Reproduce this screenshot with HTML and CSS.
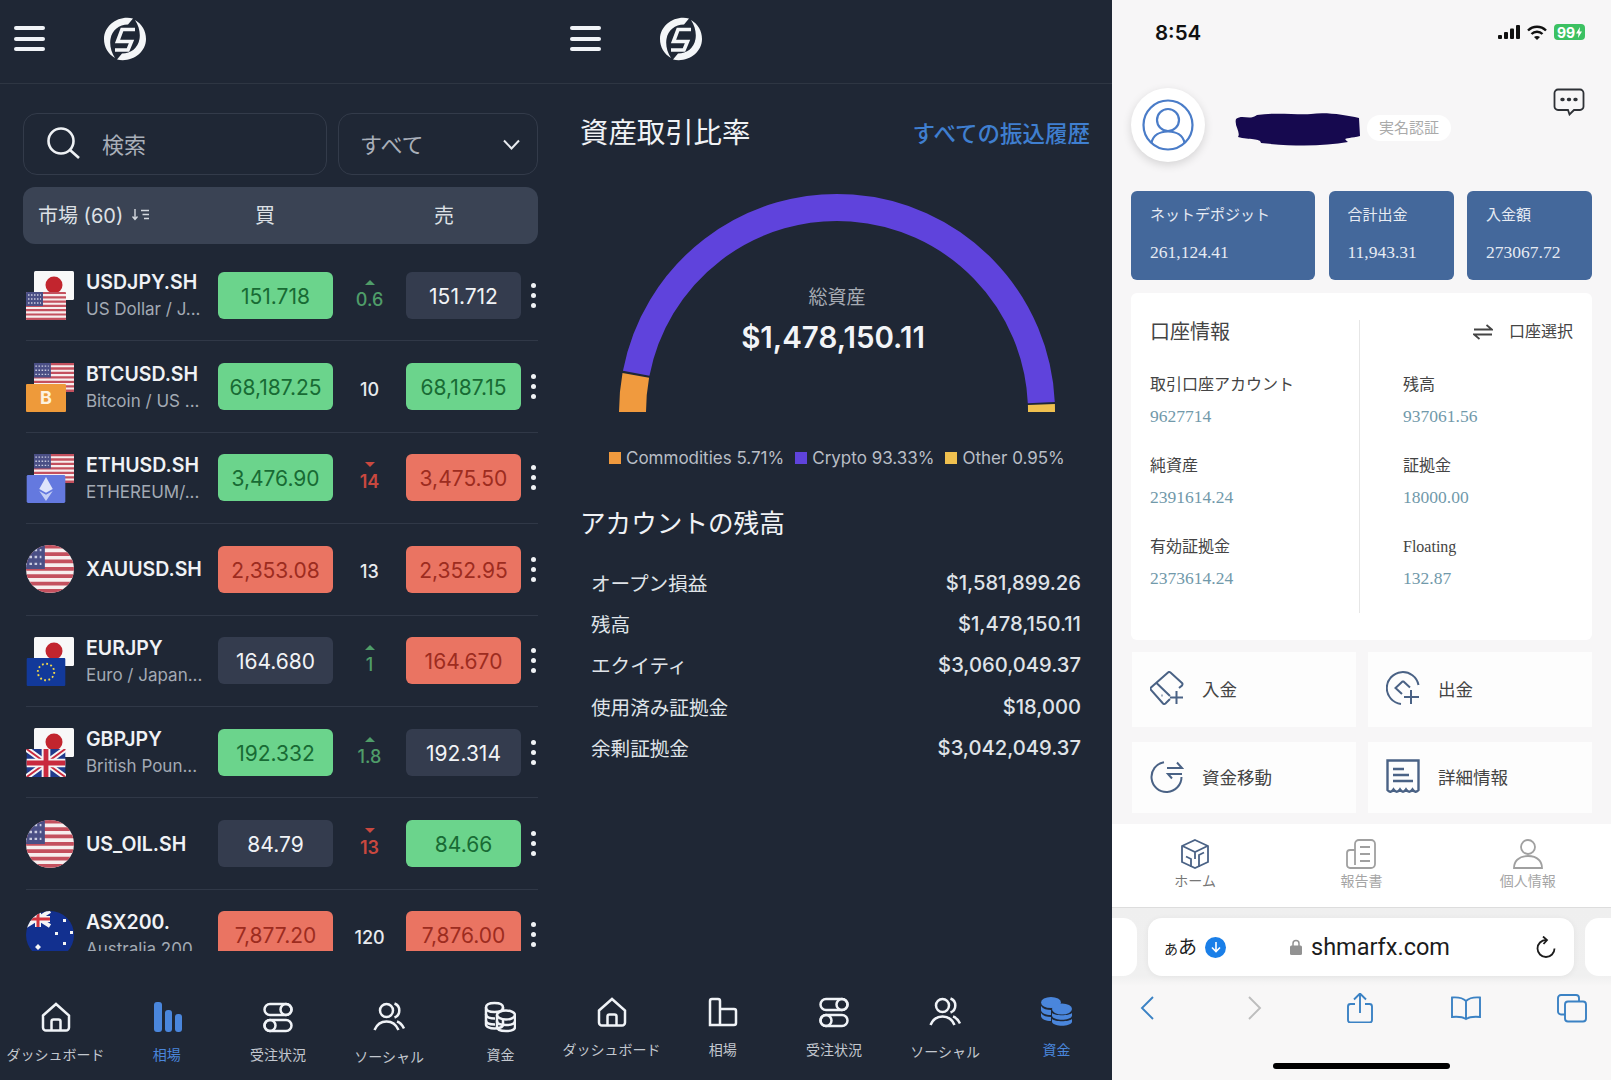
FILE: index.html
```html
<!DOCTYPE html>
<html lang="ja">
	<head>
		<meta charset="UTF-8">
		<meta name="viewport" content="width=device-width, initial-scale=1.0">
		<title>SHMAR FX</title>
		<link rel="stylesheet" href="styles.css">
	</head>
	<body>

		<svg class="sprites" width="0" height="0">
			<symbol id="flag-us" viewBox="0 0 40 28" preserveAspectRatio="xMidYMid slice">
				<rect width="40" height="28" fill="#f7eeee"/>
				<path d="M0 1h40M0 5.300h40M0 9.600h40M0 13.900h40M0 18.200h40M0 22.500h40M0 26.800h40" stroke="#c4505e" stroke-width="2.200"/>
				<rect width="17" height="14" fill="#4a4f85"/>
				<path d="M2 3h13M2 7h13M2 11h13" stroke="#c9cbe0" stroke-width="1.400" stroke-dasharray="1.500 1.500"/>
			</symbol>
			<symbol id="flag-jp" viewBox="0 0 40 29">
				<rect width="40" height="29" rx="1.500" fill="#f8f8f8"/>
				<circle cx="20" cy="14" r="8.500" fill="#c2252e"/>
			</symbol>
			<symbol id="flag-eu" viewBox="0 0 40 29">
				<rect width="40" height="29" rx="1" fill="#12399a"/>
				<circle cx="20" cy="14.500" r="8.500" fill="none" stroke="#f0d64a" stroke-width="2" stroke-dasharray="1.800 2.650"/>
			</symbol>
			<symbol id="flag-uk" viewBox="0 0 40 29">
				<rect width="40" height="29" fill="#1f3a8c"/>
				<path d="M0 0L40 29M40 0L0 29" stroke="#f5f5f5" stroke-width="6"/>
				<path d="M0 0L40 29M40 0L0 29" stroke="#c92a3e" stroke-width="2"/>
				<path d="M20 0V29M0 14.500H40" stroke="#f5f5f5" stroke-width="9"/>
				<path d="M20 0V29M0 14.500H40" stroke="#c92a3e" stroke-width="5"/>
			</symbol>
			<symbol id="flag-eth" viewBox="0 0 40 29">
				<rect width="40" height="29" rx="1.500" fill="#6479df"/>
				<path d="M20 2L27 14.500L20 18.500L13 14.500Z" fill="#dfe5fb"/>
				<path d="M20 20.500L27 16.500L20 27L13 16.500Z" fill="#c5cff5"/>
			</symbol>
			<symbol id="flag-au" viewBox="0 0 48 48">
				<rect width="48" height="48" fill="#12308f"/>
				<path d="M0 0L24 15M24 0L0 15" stroke="#f5f5f5" stroke-width="4"/>
				<path d="M12 0V16M0 8H24" stroke="#f5f5f5" stroke-width="6"/>
				<path d="M12 0V16M0 8H24" stroke="#d2343f" stroke-width="3"/>
				<path d="M37 8h3v3h-3zM29 21h3v3h-3zM44 20h3v3h-3zM37 31h3v3h-3zM12 33l3 3-3 3-3-3z" fill="#f5f5f5"/>
			</symbol>
			<symbol id="logo" viewBox="0 0 44 44">
				<path d="M30 1.500C16 -2 1 8 1 22C1 30 5 37 12 41C8 35 6.500 28 7.500 22C9 13 16 7.500 25 7.500Z" fill="#f4f6f8"/>
				<path d="M14 42.500C28 46 43 36 43 22C43 14 39 7 32 3C36 9 37.500 16 36.500 22C35 31 28 36.500 19 36.500Z" fill="#f4f6f8"/>
				<path d="M32 12.500H19L14.500 24.500H28.500L25 33H12" fill="none" stroke="#f4f6f8" stroke-width="3.600" stroke-linejoin="miter"/>
			</symbol>
			<symbol id="nav-home" viewBox="0 0 32 32">
				<path d="M3 14.500L16 3L29 14.500V26.500A3 3 0 0 1 26 29.500H6A3 3 0 0 1 3 26.500Z"/>
				<path d="M11.500 29.500V20.500A2 2 0 0 1 13.500 18.500H18.500A2 2 0 0 1 20.500 20.500V29.500"/>
			</symbol>
			<symbol id="nav-orders" viewBox="0 0 32 32">
				<rect x="2.500" y="3" width="27" height="11" rx="5.500"/>
				<circle cx="24" cy="8.500" r="5.500"/>
				<rect x="2.500" y="19" width="27" height="11" rx="5.500"/>
				<circle cx="8" cy="24.500" r="5.500"/>
			</symbol>
			<symbol id="nav-social" viewBox="0 0 32 32">
				<circle cx="13.500" cy="9.500" r="6.500"/>
				<path d="M21.500 2.500A7.500 7.500 0 0 1 21.500 16.500"/>
				<path d="M1.500 29C4 23 9 20.500 13.500 20.500S23 23 25.500 29"/>
				<path d="M24 20.500C27 21.500 29.500 24.500 31 27.500"/>
			</symbol>
			<symbol id="nav-coins" viewBox="0 0 32 32">
				<path d="M2 6.500C2 3.500 6 2 10.500 2S19 3.500 19 6.500V24C19 26 15 27.500 10.500 27.500S2 26 2 23.500Z"/>
				<path d="M2 6.500C2 9.500 6 11 10.500 11S19 9.500 19 6.500M2 13C2 16 6 17.500 11 17.500M2 19.500C2 22 6 23.500 11 23.500"/>
				<ellipse cx="22" cy="14" rx="9" ry="4.500" fill="#1f2735"/>
				<path d="M13 14V26C13 28.500 17 30 22 30S31 28.500 31 26V14"/>
				<path d="M13 20C13 22.500 17 24 22 24S31 22.500 31 20"/>
			</symbol>
		</svg>

		<div class="screens">

			<section class="panel">
				<header class="app-head">
					<div class="burger"><span></span><span></span><span></span></div>
					<svg class="logo"><use href="#logo"/></svg>
				</header>

				<div class="filters">
					<div class="search">
						<svg class="search-icon" viewBox="0 0 33 32"><circle cx="14" cy="14" r="12.500"/><path d="M23 23L32 31"/></svg>
						<span>検索</span>
					</div>
					<div class="select">
						<span>すべて</span>
						<svg class="chevron" viewBox="0 0 17 11"><path d="M1 1.500L8.500 9.500L16 1.500"/></svg>
					</div>
				</div>

				<div class="market-head">
					<div class="market-title">
						<span>市場 (60)</span>
						<svg class="sort-icon" viewBox="0 0 18 12"><path d="M3 0V10M0.500 7.500L3 10.500L5.500 7.500M9 1.500H17M10.500 5.500H17M12 9.500H17"/></svg>
					</div>
					<span class="col-buy">買</span>
					<span class="col-sell">売</span>
				</div>

				<div class="quotes">
					<div class="quote">
						<div class="pair"><svg class="flag-back"><use href="#flag-jp"/></svg><svg class="flag-front"><use href="#flag-us"/></svg></div>
						<div class="names"><strong>USDJPY.SH</strong><small>US Dollar / J...</small></div>
						<div class="price up">151.718</div>
						<div class="change pos"><i class="arrow-up"></i>0.6</div>
						<div class="price flat">151.712</div>
						<div class="more"><span></span><span></span><span></span></div>
					</div>
					<div class="quote">
						<div class="pair"><svg class="flag-back"><use href="#flag-us"/></svg><div class="flag-front coin-btc">B</div></div>
						<div class="names"><strong>BTCUSD.SH</strong><small>Bitcoin / US ...</small></div>
						<div class="price up">68,187.25</div>
						<div class="change still">10</div>
						<div class="price up">68,187.15</div>
						<div class="more"><span></span><span></span><span></span></div>
					</div>
					<div class="quote">
						<div class="pair"><svg class="flag-back"><use href="#flag-us"/></svg><svg class="flag-front"><use href="#flag-eth"/></svg></div>
						<div class="names"><strong>ETHUSD.SH</strong><small>ETHEREUM/...</small></div>
						<div class="price up">3,476.90</div>
						<div class="change neg"><i class="arrow-down"></i>14</div>
						<div class="price down">3,475.50</div>
						<div class="more"><span></span><span></span><span></span></div>
					</div>
					<div class="quote">
						<div class="pair"><svg class="flag-round"><use href="#flag-us"/></svg></div>
						<div class="names"><strong>XAUUSD.SH</strong></div>
						<div class="price down">2,353.08</div>
						<div class="change still">13</div>
						<div class="price down">2,352.95</div>
						<div class="more"><span></span><span></span><span></span></div>
					</div>
					<div class="quote">
						<div class="pair"><svg class="flag-back"><use href="#flag-jp"/></svg><svg class="flag-front"><use href="#flag-eu"/></svg></div>
						<div class="names"><strong>EURJPY</strong><small>Euro / Japan...</small></div>
						<div class="price flat">164.680</div>
						<div class="change pos"><i class="arrow-up"></i>1</div>
						<div class="price down">164.670</div>
						<div class="more"><span></span><span></span><span></span></div>
					</div>
					<div class="quote">
						<div class="pair"><svg class="flag-back"><use href="#flag-jp"/></svg><svg class="flag-front"><use href="#flag-uk"/></svg></div>
						<div class="names"><strong>GBPJPY</strong><small>British Poun...</small></div>
						<div class="price up">192.332</div>
						<div class="change pos"><i class="arrow-up"></i>1.8</div>
						<div class="price flat">192.314</div>
						<div class="more"><span></span><span></span><span></span></div>
					</div>
					<div class="quote">
						<div class="pair"><svg class="flag-round"><use href="#flag-us"/></svg></div>
						<div class="names"><strong>US_OIL.SH</strong></div>
						<div class="price flat">84.79</div>
						<div class="change neg"><i class="arrow-down"></i>13</div>
						<div class="price up">84.66</div>
						<div class="more"><span></span><span></span><span></span></div>
					</div>
					<div class="quote">
						<div class="pair"><svg class="flag-round"><use href="#flag-au"/></svg></div>
						<div class="names"><strong>ASX200.</strong><small>Australia 200</small></div>
						<div class="price down">7,877.20</div>
						<div class="change still">120</div>
						<div class="price down">7,876.00</div>
						<div class="more"><span></span><span></span><span></span></div>
					</div>
				</div>

				<nav class="app-nav nav-low">
					<div class="nav-item">
						<svg class="nav-icon"><use href="#nav-home"/></svg>
						<span>ダッシュボード</span>
					</div>
					<div class="nav-item active">
						<svg class="nav-icon" viewBox="0 0 32 32"><rect x="3" y="1" width="8" height="30" rx="3" fill="#4a86dc" stroke="none"/><rect x="14" y="9" width="7" height="22" rx="3" fill="#4a86dc" stroke="none"/><rect x="24" y="13" width="7" height="18" rx="3" fill="#4a86dc" stroke="none"/></svg>
						<span>相場</span>
					</div>
					<div class="nav-item">
						<svg class="nav-icon"><use href="#nav-orders"/></svg>
						<span>受注状況</span>
					</div>
					<div class="nav-item social">
						<svg class="nav-icon"><use href="#nav-social"/></svg>
						<span>ソーシャル</span>
					</div>
					<div class="nav-item">
						<svg class="nav-icon"><use href="#nav-coins"/></svg>
						<span>資金</span>
					</div>
				</nav>
			</section>

			<section class="panel">
				<header class="app-head">
					<div class="burger"><span></span><span></span><span></span></div>
					<svg class="logo"><use href="#logo"/></svg>
				</header>

				<div class="assets-head">
					<h2>資産取引比率</h2>
					<a class="all-link">すべての振込履歴</a>
				</div>

				<div class="gauge">
					<svg class="gauge-chart" viewBox="0 0 440 220">
						<path d="M15.500 220A204.500 204.500 0 0 1 18.800 183.400" stroke="#f09a3e"/>
						<path d="M19.200 181.300A204.500 204.500 0 0 1 424.300 210.700" stroke="#5f43dc"/>
						<path d="M424.400 212.500A204.500 204.500 0 0 1 424.500 220" stroke="#efc04f"/>
					</svg>
					<div class="gauge-text">
						<span>総資産</span>
						<strong>$1,478,150.11</strong>
					</div>
				</div>

				<div class="legend">
					<span class="legend-item"><i class="dot-orange"></i>Commodities 5.71%</span>
					<span class="legend-item"><i class="dot-purple"></i>Crypto 93.33%</span>
					<span class="legend-item"><i class="dot-yellow"></i>Other 0.95%</span>
				</div>

				<h3 class="balance-title">アカウントの残高</h3>
				<div class="balance">
					<div class="balance-row"><span>オープン損益</span><span>$1,581,899.26</span></div>
					<div class="balance-row"><span>残高</span><span>$1,478,150.11</span></div>
					<div class="balance-row"><span>エクイティ</span><span>$3,060,049.37</span></div>
					<div class="balance-row"><span>使用済み証拠金</span><span>$18,000</span></div>
					<div class="balance-row"><span>余剰証拠金</span><span>$3,042,049.37</span></div>
				</div>

				<nav class="app-nav nav-high">
					<div class="nav-item">
						<svg class="nav-icon"><use href="#nav-home"/></svg>
						<span>ダッシュボード</span>
					</div>
					<div class="nav-item">
						<svg class="nav-icon" viewBox="0 0 32 32"><path d="M3 29V5A2 2 0 0 1 5 3H11A2 2 0 0 1 13 5V29ZM13 13H27A2 2 0 0 1 29 15V27A2 2 0 0 1 27 29H3"/><path d="M20 13V29" stroke-width="0"/></svg>
						<span>相場</span>
					</div>
					<div class="nav-item">
						<svg class="nav-icon"><use href="#nav-orders"/></svg>
						<span>受注状況</span>
					</div>
					<div class="nav-item social">
						<svg class="nav-icon"><use href="#nav-social"/></svg>
						<span>ソーシャル</span>
					</div>
					<div class="nav-item active">
						<svg class="nav-icon" viewBox="0 0 32 32">
							<ellipse cx="11" cy="6.500" rx="10" ry="5.500" fill="#4a86dc" stroke="none"/>
							<path d="M1 10C3 13 7 14 11 14V19C6 19 1 17 1 14ZM1 17C3 20 7 21 11 21V25C6 25 1 23 1 20Z" fill="#4a86dc" stroke="none"/>
							<ellipse cx="22" cy="13" rx="10" ry="5.500" fill="#4a86dc" stroke="none"/>
							<path d="M12 17C15 20 29 20 32 17V20C30 25 14 25 12 20ZM12 23C15 26 29 26 32 23V26C30 31 14 31 12 26Z" fill="#4a86dc" stroke="none"/>
						</svg>
						<span>資金</span>
					</div>
				</nav>
			</section>

			<section class="account">
				<div class="status-bar">
					<span class="clock">8:54</span>
					<div class="status-icons">
						<svg class="signal" viewBox="0 0 22 14"><rect x="0" y="10" width="4" height="4" rx="1"/><rect x="6" y="7" width="4" height="7" rx="1"/><rect x="12" y="3.500" width="4" height="10.500" rx="1"/><rect x="18" y="0" width="4" height="14" rx="1"/></svg>
						<svg class="wifi" viewBox="0 0 20 15"><path d="M1 5.500C6 0.500 14 0.500 19 5.500" fill="none" stroke="#111" stroke-width="2.400"/><path d="M4.500 9C7.500 6 12.500 6 15.500 9" fill="none" stroke="#111" stroke-width="2.400"/><path d="M7 12C8.500 10.500 11.500 10.500 13 12L10 15Z" fill="#111"/></svg>
						<div class="battery">99<svg class="bolt" viewBox="0 0 6 11"><path d="M4 0L0 6.500H2.500L2 11L6 4.500H3.500Z"/></svg></div>
					</div>
				</div>

				<div class="profile">
					<div class="avatar">
						<svg class="avatar-icon" viewBox="0 0 52 52"><circle cx="26" cy="26" r="24.500"/><circle cx="26" cy="21" r="11"/><path d="M9.500 44C11 36 18 32.500 26 32.500S41 36 42.500 44"/></svg>
					</div>
					<svg class="redaction" viewBox="0 0 125 34"><path d="M1 7C8 2 14 9 22 3C40 0 62 3 76 2C92 0 110 3 124 6L125 24C114 27 106 25 113 30C90 34 62 35 26 31C26 26 14 28 3 25C6 20 -1 14 1 7Z"/></svg>
					<span class="verify">実名認証</span>
					<svg class="chat" viewBox="0 0 32 28"><path d="M5 1.500H27A3.500 3.500 0 0 1 30.500 5V18.500A3.500 3.500 0 0 1 27 22H21L16.500 26.500L15 22H5A3.500 3.500 0 0 1 1.500 18.500V5A3.500 3.500 0 0 1 5 1.500Z"/><path d="M9 11.500H10M15.500 11.500H16.500M22 11.500H23" stroke-width="3.400" stroke-linecap="round"/></svg>
				</div>

				<div class="stats">
					<div class="stat"><span>ネットデポジット</span><strong>261,124.41</strong></div>
					<div class="stat"><span>合計出金</span><strong>11,943.31</strong></div>
					<div class="stat"><span>入金額</span><strong>273067.72</strong></div>
				</div>

				<div class="info">
					<div class="info-col info-left">
						<div class="info-head"><h4>口座情報</h4></div>
						<div class="field"><span>取引口座アカウント</span><b>9627714</b></div>
						<div class="field"><span>純資産</span><b>2391614.24</b></div>
						<div class="field"><span>有効証拠金</span><b>2373614.24</b></div>
					</div>
					<div class="info-col info-right">
						<div class="info-head pick">
							<svg class="swap" viewBox="0 0 20 16"><path d="M1 5.500H19L13.500 1M19 10.500H1L6.500 15"/></svg>
							<span>口座選択</span>
						</div>
						<div class="field"><span>残高</span><b>937061.56</b></div>
						<div class="field"><span>証拠金</span><b>18000.00</b></div>
						<div class="field"><span>Floating</span><b>132.87</b></div>
					</div>
				</div>

				<div class="tiles">
					<div class="tile">
						<svg class="tile-icon" viewBox="0 0 34 34"><path d="M20 28L15.500 32.500Q14 33.500 13 32.500L1 19Q0 17.500 1 16.500L18 1.500Q19 0.500 20.500 1.500L32 12Q33 13 32 14.500L29 17"/><path d="M6.500 12L20 25M11.500 24.500H12.500"/><path d="M26.500 20V33M20 26.500H33"/></svg>
						<span>入金</span>
					</div>
					<div class="tile">
						<svg class="tile-icon" viewBox="0 0 34 34"><path d="M32.500 14A16 16 0 1 0 15 33"/><path d="M17 10L9.500 17L16 23M17 10L24 16.500"/><path d="M25 19V33M18 26H33"/></svg>
						<span>出金</span>
					</div>
					<div class="tile">
						<svg class="tile-icon" viewBox="0 0 34 34"><path d="M14 3.200A15 15 0 1 0 31.500 18"/><path d="M17 9H32L27 3.500"/><path d="M32 15H18L22 19.500"/></svg>
						<span>資金移動</span>
					</div>
					<div class="tile">
						<svg class="tile-icon heavy" viewBox="0 0 34 34"><path d="M1.500 1.500H32.500V31C30.500 33.500 28.500 33.500 26.500 30.500C24.500 33.500 22 33.500 20 30.500C18 33.500 16 33.500 14 30.500C12 33.500 9.500 33.500 7.500 30.500C5.500 33.500 3.500 33.500 1.500 31Z"/><path d="M7 10H18M7 16H23M7 22H27"/></svg>
						<span>詳細情報</span>
					</div>
				</div>

				<div class="tabs">
					<div class="tab current">
						<svg class="tab-icon" viewBox="0 0 30 30"><path d="M15 1L28 7V23L15 29L2 23V7Z"/><path d="M2.500 7L15 13L27.500 7M15 13V20M19 28V16L24 13.500M11 28V20L6 17.500"/></svg>
						<span>ホーム</span>
					</div>
					<div class="tab">
						<svg class="tab-icon" viewBox="0 0 30 30"><path d="M9 26V5A4 4 0 0 1 13 1H25A4 4 0 0 1 29 5V25A4 4 0 0 1 25 29H4A3 3 0 0 1 1 26V14A3 3 0 0 1 4 11H9"/><path d="M14 8H24M14 15H24M14 22H24"/></svg>
						<span>報告書</span>
					</div>
					<div class="tab">
						<svg class="tab-icon" viewBox="0 0 30 30"><circle cx="15" cy="8" r="7"/><path d="M1 29C1 23 5 17 15 17S29 23 29 29Z"/></svg>
						<span>個人情報</span>
					</div>
				</div>

				<div class="browser">
					<div class="address-row">
						<div class="side-pill left-pill"></div>
						<div class="address">
							<span class="aa"><small>あ</small>あ</span>
							<span class="download"><svg viewBox="0 0 12 12"><path d="M6 1V10M2 6.500L6 10.500L10 6.500"/></svg></span>
							<div class="url">
								<svg class="lock" viewBox="0 0 12 16"><path d="M3 7V4.500A3 3 0 0 1 9 4.500V7" fill="none" stroke="#929292" stroke-width="1.500"/><rect y="6.500" width="12" height="9.500" rx="1.500" fill="#929292"/></svg>
								<span>shmarfx.com</span>
							</div>
							<svg class="reload" viewBox="0 0 20 22"><path d="M10 4A8.500 8.500 0 1 0 18.500 12.500"/><path d="M7 0.500L11 4L7.500 8"/></svg>
						</div>
						<div class="side-pill right-pill"></div>
					</div>
					<div class="toolbar">
						<svg class="tool" viewBox="0 0 30 24"><path d="M20 1L9 12L20 23"/></svg>
						<svg class="tool off" viewBox="0 0 30 24"><path d="M10 1L21 12L10 23"/></svg>
						<svg class="tool" viewBox="0 0 30 30"><path d="M10 11H5.500A2.500 2.500 0 0 0 3 13.500V27A2.500 2.500 0 0 0 5.500 29.500H24.500A2.500 2.500 0 0 0 27 27V13.500A2.500 2.500 0 0 0 24.500 11H20"/><path d="M15 20V1M9 6.500L15 0.500L21 6.500"/></svg>
						<svg class="tool" viewBox="0 0 30 24"><path d="M15 5C12 2 7 1 1 1.500V21C7 20.500 12 21 15 23C18 21 23 20.500 29 21V1.500C23 1 18 2 15 5ZM15 5V23"/></svg>
						<svg class="tool" viewBox="0 0 30 28"><rect x="8" y="7.500" width="21" height="20" rx="3"/><path d="M8 20.500H4A3 3 0 0 1 1 17.500V4A3 3 0 0 1 4 1H19A3 3 0 0 1 22 4V7.500"/></svg>
					</div>
					<div class="home-bar"></div>
				</div>
			</section>

		</div>

	</body>
</html>
```

FILE: styles.css
```css
* {
	box-sizing: border-box;
	margin: 0;
	padding: 0;
}
body {
	width: 1611px;
	height: 1080px;
	overflow: hidden;
	background-color: #1f2735;
	font-family: Inter, 'Noto Sans CJK JP', sans-serif;
}
.sprites {
	position: absolute;
}
.screens {
	display: flex;
	height: 1080px;
}

/* dark app panels */
.panel {
	display: flex;
	flex-direction: column;
	flex: none;
	width: 556px;
	height: 1080px;
	background-color: #1f2735;
	color: #f0f2f5;
}
.app-head {
	display: flex;
	align-items: center;
	flex: none;
	height: 84px;
	padding: 0 0 6px 14px;
	border-bottom: 1px solid #2e3643;
}
.burger {
	display: flex;
	flex-direction: column;
	justify-content: space-between;
	width: 31px;
	height: 25px;
}
.burger span {
	height: 4px;
	border-radius: 2px;
	background-color: #f0f3f7;
}
.logo {
	width: 44px;
	height: 44px;
	margin-left: 58px;
}

.filters {
	display: flex;
	gap: 11px;
	flex: none;
	margin: 29px 18px 0 23px;
}
.search,
.select {
	display: flex;
	align-items: center;
	height: 62px;
	border: 1px solid #333b4a;
	border-radius: 14px;
	color: #a9afb9;
	font-size: 22px;
}
.search {
	gap: 22px;
	width: 304px;
	padding: 0 0 3px 23px;
}
.search-icon {
	width: 33px;
	height: 32px;
	fill: none;
	stroke: #eef1f4;
	stroke-width: 2.6;
}
.select {
	justify-content: space-between;
	width: 200px;
	padding: 0 17px 0 21px;
}
.select span {
	margin-bottom: 3px;
}
.chevron {
	width: 17px;
	height: 11px;
	fill: none;
	stroke: #e8ebef;
	stroke-width: 2;
}
.market-head {
	display: flex;
	align-items: center;
	flex: none;
	height: 57px;
	margin: 12px 18px 0 23px;
	padding: 0 0 2px 15px;
	border-radius: 12px;
	background-color: #3a4354;
	color: #dde0e5;
	font-size: 20px;
}
.market-title {
	display: flex;
	align-items: center;
	gap: 9px;
	width: 197px;
}
.sort-icon {
	width: 18px;
	height: 12px;
	fill: none;
	stroke: #d5d9df;
	stroke-width: 1.400;
}
.col-buy {
	width: 60px;
	text-align: center;
}
.col-sell {
	width: 60px;
	margin-left: 119px;
	text-align: center;
}

.quotes {
	flex: none;
	height: 701px;
	margin: 6px 18px 0 26px;
	overflow: hidden;
}
.quote {
	display: flex;
	align-items: center;
	height: 91.4px;
	border-bottom: 1px solid #303847;
}
.pair {
	position: relative;
	flex: none;
	width: 48px;
	height: 48px;
}
.flag-back {
	position: absolute;
	top: 0;
	left: 8px;
	width: 40px;
	height: 29px;
}
.flag-front {
	position: absolute;
	top: 21px;
	left: 0;
	width: 40px;
	height: 28px;
	border-radius: 1px;
}
.flag-round {
	width: 48px;
	height: 48px;
	border-radius: 50%;
}
.coin-btc {
	background-color: #ee9a3a;
	color: #fdf1df;
	font-size: 18px;
	font-weight: 700;
	line-height: 28px;
	text-align: center;
}
.names {
	display: flex;
	flex-direction: column;
	gap: 4px;
	flex: none;
	width: 132px;
	margin-left: 12px;
	white-space: nowrap;
}
.names strong {
	font-size: 19.500px;
	font-weight: 600;
	line-height: 24px;
}
.names small {
	color: #a3aab4;
	font-size: 17px;
	line-height: 22px;
}
.price {
	flex: none;
	width: 115px;
	height: 47px;
	border-radius: 6px;
	font-size: 21px;
	line-height: 49px;
	text-align: center;
}
.up {
	background-color: #6bd48c;
	color: #186b34;
}
.down {
	background-color: #ea7462;
	color: #9d2c1f;
}
.flat {
	background-color: #343c4e;
	color: #f1f3f6;
}
.change {
	display: flex;
	flex-direction: column;
	align-items: center;
	flex: none;
	width: 73px;
	font-size: 18px;
	line-height: 22px;
}
.change i {
	width: 0;
	height: 0;
	margin-bottom: 4px;
	border-right: 5.500px solid transparent;
	border-left: 5.500px solid transparent;
}
.arrow-up {
	border-bottom: 5px solid #4f9d69;
}
.arrow-down {
	border-top: 5px solid #c9483f;
}
.pos {
	color: #4f9d69;
	font-weight: 500;
}
.neg {
	color: #c9483f;
	font-weight: 600;
}
.still {
	padding-top: 6px;
	color: #e8ebef;
	font-weight: 500;
}
.more {
	display: flex;
	flex-direction: column;
	gap: 5px;
	margin-left: 10px;
}
.more span {
	width: 5px;
	height: 5px;
	border-radius: 50%;
	background-color: #f0f2f5;
}

.app-nav {
	display: grid;
	grid-template-columns: repeat(5, 1fr);
	margin-top: auto;
}
.nav-low {
	padding-bottom: 16px;
}
.nav-high {
	padding-bottom: 21px;
}
.nav-item {
	display: flex;
	flex-direction: column;
	align-items: center;
	gap: 13px;
	color: #c3c8cf;
	font-size: 14px;
	line-height: 18px;
	white-space: nowrap;
}
.nav-icon {
	width: 32px;
	height: 32px;
	fill: none;
	stroke: #f0f3f7;
	stroke-width: 2.500;
}
.nav-item.active {
	color: #4a86dc;
}
.nav-item.social {
	gap: 15px;
	margin-bottom: -2px;
}

/* assets panel */
.assets-head {
	display: flex;
	justify-content: space-between;
	align-items: center;
	flex: none;
	margin-top: 30px;
	padding: 0 22px 0 24px;
}
.assets-head h2 {
	font-size: 28.400px;
	font-weight: 400;
	line-height: 38px;
}
.all-link {
	margin-bottom: 3px;
	color: #3f7fd0;
	font-size: 22.500px;
	font-weight: 500;
}
.gauge {
	position: relative;
	flex: none;
	width: 440px;
	height: 220px;
	margin: 40px 0 0 61px;
}
.gauge-chart {
	display: block;
	width: 440px;
	height: 220px;
	fill: none;
	stroke-width: 27;
}
.gauge-text {
	position: absolute;
	top: 92px;
	left: 0;
	display: flex;
	flex-direction: column;
	align-items: center;
	gap: 8px;
	width: 440px;
	color: #a6abb3;
	font-size: 19px;
	line-height: 28px;
}
.gauge-text strong {
	margin-right: 8px;
	color: #f2f4f7;
	font-size: 29.500px;
	font-weight: 600;
	line-height: 34px;
}
.legend {
	display: flex;
	gap: 11px;
	flex: none;
	margin-top: 34px;
	padding-left: 53px;
	color: #b9bec6;
	font-size: 17px;
	line-height: 24px;
}
.legend-item {
	display: flex;
	align-items: center;
	gap: 5px;
}
.legend-item i {
	width: 12px;
	height: 12px;
}
.dot-orange {
	background-color: #f09a3e;
}
.dot-purple {
	background-color: #5f43dc;
}
.dot-yellow {
	background-color: #efc04f;
}
.balance-title {
	flex: none;
	margin-top: 37px;
	padding-left: 24px;
	font-size: 25.600px;
	font-weight: 400;
	line-height: 34px;
}
.balance {
	flex: none;
	margin-top: 21px;
	padding: 0 31px 0 35px;
}
.balance-row {
	display: flex;
	justify-content: space-between;
	align-items: center;
	height: 41.200px;
	color: #dfe3e8;
	font-size: 19.600px;
}
.balance-row span:last-child {
	font-size: 20.200px;
	font-weight: 500;
}

/* phone account page */
.account {
	display: flex;
	flex-direction: column;
	flex: none;
	width: 499px;
	height: 1080px;
	background-color: #f7f6f7;
	color: #444;
	font-family: 'Liberation Serif', 'Noto Sans CJK JP', serif;
}
.status-bar {
	display: flex;
	justify-content: space-between;
	align-items: center;
	flex: none;
	height: 64px;
	padding: 0 26px 0 43px;
	color: #111;
	font-family: Inter, sans-serif;
}
.clock {
	font-size: 20.500px;
	font-weight: 600;
}
.status-icons {
	display: flex;
	align-items: center;
	gap: 7px;
}
.signal {
	width: 22px;
	height: 14px;
	fill: #111;
}
.wifi {
	width: 20px;
	height: 15px;
}
.battery {
	display: flex;
	align-items: center;
	justify-content: center;
	gap: 1px;
	width: 31px;
	height: 16px;
	border-radius: 4px;
	background-color: #3cc162;
	color: #fff;
	font-size: 14px;
	font-weight: 700;
}
.bolt {
	width: 6px;
	height: 11px;
	fill: #fff;
}
.profile {
	display: flex;
	align-items: center;
	flex: none;
	margin-top: 24px;
	padding: 0 26px 0 19px;
}
.avatar {
	display: flex;
	align-items: center;
	justify-content: center;
	flex: none;
	width: 74px;
	height: 74px;
	border-radius: 50%;
	background-color: #fff;
	box-shadow: 0 3px 10px rgba(0, 0, 0, 0.14);
}
.avatar-icon {
	width: 52px;
	height: 52px;
	fill: none;
	stroke: #4a7cc8;
	stroke-width: 2.200;
}
.redaction {
	flex: none;
	width: 125px;
	height: 34px;
	margin: 8px 0 0 30px;
	fill: #16094f;
}
.verify {
	flex: none;
	height: 26px;
	margin: 6px 0 0 7px;
	padding: 0 12px;
	border-radius: 13px;
	background-color: #fff;
	color: #aaa;
	font-size: 15px;
	line-height: 26px;
}
.chat {
	flex: none;
	width: 32px;
	height: 28px;
	margin: 0 0 0 auto;
	align-self: flex-start;
	fill: none;
	stroke: #2e3136;
	stroke-width: 1.800;
}
.stats {
	display: grid;
	grid-template-columns: 184px 125px 125px;
	gap: 13.500px;
	flex: none;
	margin: 29px 19px 0;
}
.stat {
	display: flex;
	flex-direction: column;
	gap: 17px;
	height: 89px;
	padding: 14px 0 0 19px;
	border-radius: 6px;
	background-color: #44689b;
	color: #e6ebf3;
	font-size: 15px;
	line-height: 20px;
}
.stat strong {
	font-size: 17.500px;
	font-weight: 400;
}
.info {
	display: flex;
	flex: none;
	height: 347px;
	margin: 13px 19px 0;
	padding: 27px 0;
	border-radius: 6px;
	background-color: #fff;
}
.info-col {
	display: flex;
	flex-direction: column;
	gap: 24px;
}
.info-left {
	width: 229px;
	padding-left: 19px;
	border-right: 1px solid #e6e6e6;
}
.info-right {
	flex: 1;
	padding-left: 43px;
}
.info-head {
	height: 24px;
	line-height: 24px;
	margin-bottom: 5px;
}
.info-head h4 {
	font-size: 20px;
	font-weight: 400;
}
.pick {
	display: flex;
	justify-content: flex-end;
	align-items: center;
	gap: 16px;
	padding-right: 19px;
	font-size: 16px;
}
.swap {
	width: 20px;
	height: 16px;
	fill: none;
	stroke: #444;
	stroke-width: 1.800;
}
.field {
	display: flex;
	flex-direction: column;
	gap: 7px;
	height: 57px;
	font-size: 16px;
	line-height: 24px;
}
.field b {
	color: #7199aa;
	font-size: 17.500px;
	font-weight: 400;
}
.tiles {
	display: grid;
	grid-template-columns: 1fr 1fr;
	grid-template-rows: 75px 71px;
	gap: 15px 12px;
	flex: none;
	margin: 12px 19px 0 20px;
}
.tile {
	display: flex;
	align-items: center;
	gap: 18px;
	padding: 0 0 3px 18px;
	background-color: #fdfdfd;
	font-size: 17.500px;
}
.tile-icon {
	flex: none;
	width: 34px;
	height: 34px;
	fill: none;
	stroke: #4a6285;
	stroke-width: 2;
}
.tile-icon.heavy {
	stroke-width: 2.400;
}
.tabs {
	display: grid;
	grid-template-columns: repeat(3, 1fr);
	flex: none;
	height: 84px;
	margin-top: 11px;
	padding-top: 15px;
	border-bottom: 1px solid #ddd;
	background-color: #fff;
}
.tab {
	display: flex;
	flex-direction: column;
	align-items: center;
	gap: 4px;
	color: #a5a5a5;
	font-size: 14px;
	line-height: 18px;
}
.tab-icon {
	width: 30px;
	height: 30px;
	fill: none;
	stroke: #a0a0a0;
	stroke-width: 1.800;
}
.tab.current {
	color: #777;
}
.tab.current .tab-icon {
	stroke: #4a6285;
}
.browser {
	flex: 1;
	padding-top: 1px;
	background: linear-gradient(#efefef, #f0f0f0 68px, #f8f7f7 78px);
	font-family: Inter, 'Noto Sans CJK JP', sans-serif;
}
.address-row {
	display: flex;
	gap: 11px;
	height: 58px;
	margin-top: 9px;
}
.side-pill {
	flex: none;
	width: 25px;
	background-color: #fff;
}
.left-pill {
	border-radius: 0 14px 14px 0;
}
.right-pill {
	width: 26px;
	border-radius: 14px 0 0 14px;
}
.address {
	display: flex;
	align-items: center;
	flex: 1;
	padding: 0 18px 0 16px;
	border-radius: 14px;
	background-color: #fff;
	box-shadow: 0 1px 6px rgba(0, 0, 0, 0.06);
	color: #1c1c1c;
}
.aa {
	margin-bottom: 3px;
	font-size: 19px;
}
.aa small {
	font-size: 14px;
}
.download {
	display: flex;
	align-items: center;
	justify-content: center;
	width: 21px;
	height: 21px;
	margin-left: 8px;
	border-radius: 50%;
	background-color: #1a7fe8;
}
.download svg {
	width: 12px;
	height: 12px;
	fill: none;
	stroke: #fff;
	stroke-width: 1.600;
}
.url {
	display: flex;
	align-items: center;
	gap: 9px;
	margin-left: 64px;
	font-family: Roboto, sans-serif;
	font-size: 23.500px;
}
.lock {
	width: 12px;
	height: 16px;
}
.reload {
	width: 20px;
	height: 22px;
	margin-left: auto;
	fill: none;
	stroke: #1c1c1c;
	stroke-width: 1.800;
}
.toolbar {
	display: flex;
	justify-content: space-between;
	align-items: center;
	height: 30px;
	margin-top: 17px;
	padding: 0 24px 0 21px;
}
.tool {
	width: 30px;
	height: 30px;
	fill: none;
	stroke: #3b82c4;
	stroke-width: 1.900;
}
.tool.off {
	stroke: #bdbdbd;
}
.home-bar {
	width: 177px;
	height: 6px;
	margin: 40px auto 0;
	border-radius: 3px;
	background-color: #000;
}
```
